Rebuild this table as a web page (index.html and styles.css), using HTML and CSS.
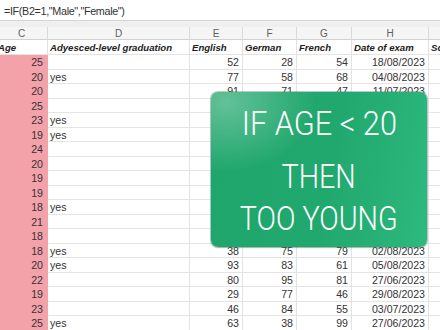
FILE: index.html
```html
<!DOCTYPE html>
<html>
<head>
<meta charset="utf-8">
<link rel="stylesheet" href="styles.css">
</head>
<body>
<div class="sheet">
  <div class="formula">=IF(B2=1,"Male","Female")</div>
  <div class="band"></div>
  <div class="row letters">
    <div class="cell">C</div><div class="cell">D</div><div class="cell">E</div><div class="cell">F</div><div class="cell">G</div><div class="cell">H</div><div class="cell">I</div>
  </div>
  <div class="row head">
    <div class="cell age">Age</div><div class="cell">Adyesced-level graduation</div><div class="cell">English</div><div class="cell">German</div><div class="cell">French</div><div class="cell">Date of exam</div><div class="cell">Sc</div>
  </div>
  <div class="row"><div class="cell pink">25</div><div class="cell"></div><div class="cell num">52</div><div class="cell num">28</div><div class="cell num">54</div><div class="cell num">18/08/2023</div><div class="cell"></div></div>
  <div class="row"><div class="cell pink">20</div><div class="cell">yes</div><div class="cell num">77</div><div class="cell num">58</div><div class="cell num">68</div><div class="cell num">04/08/2023</div><div class="cell"></div></div>
  <div class="row"><div class="cell pink">20</div><div class="cell"></div><div class="cell num">91</div><div class="cell num">71</div><div class="cell num">47</div><div class="cell num">11/07/2023</div><div class="cell"></div></div>
  <div class="row"><div class="cell pink">25</div><div class="cell"></div><div class="cell num">64</div><div class="cell num">52</div><div class="cell num">70</div><div class="cell num">14/07/2023</div><div class="cell"></div></div>
  <div class="row"><div class="cell pink">23</div><div class="cell">yes</div><div class="cell num">45</div><div class="cell num">66</div><div class="cell num">39</div><div class="cell num">21/08/2023</div><div class="cell"></div></div>
  <div class="row"><div class="cell pink">19</div><div class="cell">yes</div><div class="cell num">88</div><div class="cell num">41</div><div class="cell num">73</div><div class="cell num">30/06/2023</div><div class="cell"></div></div>
  <div class="row"><div class="cell pink">24</div><div class="cell"></div><div class="cell num">57</div><div class="cell num">90</div><div class="cell num">62</div><div class="cell num">08/08/2023</div><div class="cell"></div></div>
  <div class="row"><div class="cell pink">20</div><div class="cell"></div><div class="cell num">33</div><div class="cell num">47</div><div class="cell num">85</div><div class="cell num">17/07/2023</div><div class="cell"></div></div>
  <div class="row"><div class="cell pink">19</div><div class="cell"></div><div class="cell num">72</div><div class="cell num">63</div><div class="cell num">58</div><div class="cell num">25/08/2023</div><div class="cell"></div></div>
  <div class="row"><div class="cell pink">19</div><div class="cell"></div><div class="cell num">60</div><div class="cell num">35</div><div class="cell num">91</div><div class="cell num">03/08/2023</div><div class="cell"></div></div>
  <div class="row"><div class="cell pink">18</div><div class="cell">yes</div><div class="cell num">49</div><div class="cell num">80</div><div class="cell num">44</div><div class="cell num">12/07/2023</div><div class="cell"></div></div>
  <div class="row"><div class="cell pink">21</div><div class="cell"></div><div class="cell num">95</div><div class="cell num">59</div><div class="cell num">66</div><div class="cell num">28/06/2023</div><div class="cell"></div></div>
  <div class="row"><div class="cell pink">18</div><div class="cell"></div><div class="cell num">41</div><div class="cell num">68</div><div class="cell num">50</div><div class="cell num">09/08/2023</div><div class="cell"></div></div>
  <div class="row"><div class="cell pink">18</div><div class="cell">yes</div><div class="cell num">38</div><div class="cell num">75</div><div class="cell num">79</div><div class="cell num">02/08/2023</div><div class="cell"></div></div>
  <div class="row"><div class="cell pink">20</div><div class="cell">yes</div><div class="cell num">93</div><div class="cell num">83</div><div class="cell num">61</div><div class="cell num">05/08/2023</div><div class="cell"></div></div>
  <div class="row"><div class="cell pink">22</div><div class="cell"></div><div class="cell num">80</div><div class="cell num">95</div><div class="cell num">81</div><div class="cell num">27/06/2023</div><div class="cell"></div></div>
  <div class="row"><div class="cell pink">19</div><div class="cell"></div><div class="cell num">29</div><div class="cell num">77</div><div class="cell num">46</div><div class="cell num">29/08/2023</div><div class="cell"></div></div>
  <div class="row"><div class="cell pink">23</div><div class="cell"></div><div class="cell num">46</div><div class="cell num">84</div><div class="cell num">55</div><div class="cell num">03/07/2023</div><div class="cell"></div></div>
  <div class="row"><div class="cell pink">25</div><div class="cell">yes</div><div class="cell num">63</div><div class="cell num">38</div><div class="cell num">99</div><div class="cell num">27/06/2023</div><div class="cell"></div></div>

  <div class="card">
    <div class="line l1">IF AGE &lt; 20</div>
    <div class="line l2">THEN</div>
    <div class="line l3">TOO YOUNG</div>
  </div>
</div>
</body>
</html>
```

FILE: styles.css
```css
html, body {
  margin: 0;
  padding: 0;
  background: #ffffff;
}
body {
  width: 440px;
  height: 330px;
  overflow: hidden;
  font-family: "Liberation Sans", Arial, sans-serif;
  color: #333333;
}
.sheet {
  position: relative;
  width: 440px;
  height: 330px;
  overflow: hidden;
}
.formula {
  height: 21px;
  box-sizing: border-box;
  padding-left: 4px;
  font-size: 10.8px;
  letter-spacing: -0.35px;
  line-height: 23px;
  color: #333;
  background: #ffffff;
  border-bottom: 1px solid #d6d6d6;
}
.band {
  height: 6px;
  background: #efefef;
}
.row {
  display: grid;
  grid-template-columns: 48px 142px 53px 54px 55px 77px 60px;
  width: 489px;
  height: 14.5px;
}
.cell {
  box-sizing: border-box;
  border-right: 1px solid #e2e2e2;
  border-bottom: 1px solid #e4e4e4;
  padding: 0 2px;
  font-size: 10.6px;
  line-height: 14px;
  white-space: nowrap;
  overflow: hidden;
}
.num {
  text-align: right;
  padding-right: 3px;
}
.pink {
  background: #f3a2aa;
  border-bottom-color: #f3a2aa;
  border-right-color: #f3a2aa;
  text-align: right;
  padding-right: 4px;
}
.letters {
  height: 13px;
  background: #f5f5f5;
}
.letters .cell {
  text-align: center;
  font-size: 10px;
  line-height: 13px;
  color: #5f5f5f;
  border-right-color: #dadada;
  border-bottom-color: #d2d2d2;
}
.letters .cell:first-child {
  padding-right: 6px;
}
.head {
  height: 15px;
}
.head .cell {
  font-weight: bold;
  font-style: italic;
  font-size: 9.6px;
  line-height: 15px;
  color: #222;
}
.head .age {
  text-indent: -4px;
}
.card {
  position: absolute;
  left: 211px;
  top: 92px;
  width: 216px;
  height: 155px;
  box-sizing: border-box;
  padding-top: 15px;
  border-radius: 7px;
  background:
    radial-gradient(ellipse 90px 70px at 15px 10px, rgba(255,255,255,0.3), rgba(255,255,255,0) 100%),
    linear-gradient(100deg, #1fa66c 0%, #21a86e 55%, #2db97f 100%);
  box-shadow: 0 0 0 1px rgba(60,110,90,0.35), 0 1px 2px rgba(0,0,0,0.15);
  display: flex;
  flex-direction: column;
  align-items: center;
  color: #ffffff;
  font-family: Roboto, "Open Sans", sans-serif;
  font-weight: 300;
  font-size: 33px;
  line-height: 33px;
}
.line {
  transform: scaleX(0.87);
  white-space: nowrap;
}
.l1 {
  transform: scaleX(0.93);
  margin-bottom: 20px;
}
.l2 {
  margin-bottom: 9px;
}
```
